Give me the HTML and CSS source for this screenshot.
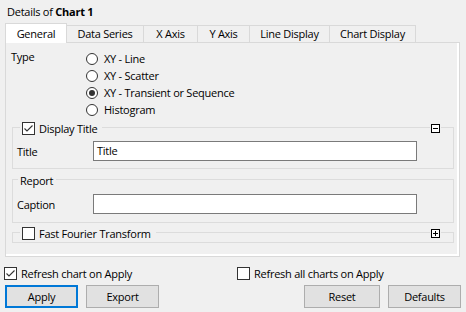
FILE: index.html
```html
<!DOCTYPE html>
<html lang="en">
<head>
  <meta charset="UTF-8">
  <title>Details of Chart 1</title>
  <link rel="stylesheet" href="styles.css">
</head>
<body>
  <div class="caption">Details of <b>Chart 1</b></div>

  <div class="tabs">
    <div class="tab tab-general active">General</div>
    <div class="tab tab-series">Data Series</div>
    <div class="tab tab-x">X Axis</div>
    <div class="tab tab-y">Y Axis</div>
    <div class="tab tab-line">Line Display</div>
    <div class="tab tab-chart">Chart Display</div>
  </div>

  <div class="panel">
    <div class="page">
      <div class="type-row">
        <div class="type-label">Type</div>
        <div class="radios">
          <div class="radio"><span class="radio-dot"></span>XY - Line</div>
          <div class="radio"><span class="radio-dot"></span>XY - Scatter</div>
          <div class="radio"><span class="radio-dot checked"></span>XY - Transient or Sequence</div>
          <div class="radio"><span class="radio-dot"></span>Histogram</div>
        </div>
      </div>

      <div class="group group-title">
        <div class="group-head">
          <span class="head-title">
            <span class="check"><svg width="11" height="11" viewBox="0 0 11 11"><polyline points="1.5,5.5 4,8 9.5,2.5" fill="none" stroke="#333" stroke-width="1.1"/></svg></span>
            Display Title
          </span>
          <span class="toggle"><svg width="9" height="9" viewBox="0 0 9 9"><rect x="0.5" y="0.5" width="8" height="8" fill="#fff" stroke="#000"/><line x1="2" y1="4.5" x2="7" y2="4.5" stroke="#000"/></svg></span>
        </div>
        <div class="field">
          <span class="field-label">Title</span>
          <div class="input">Title</div>
        </div>
      </div>

      <div class="group group-report">
        <div class="group-head">
          <span class="head-title">Report</span>
        </div>
        <div class="field">
          <span class="field-label">Caption</span>
          <div class="input"></div>
        </div>
      </div>

      <div class="group group-fft">
        <div class="group-head">
          <span class="head-title">
            <span class="check"></span>
            Fast Fourier Transform
          </span>
          <span class="toggle"><svg width="9" height="9" viewBox="0 0 9 9"><rect x="0.5" y="0.5" width="8" height="8" fill="#fff" stroke="#000"/><line x1="2" y1="4.5" x2="7" y2="4.5" stroke="#000"/><line x1="4.5" y1="2" x2="4.5" y2="7" stroke="#000"/></svg></span>
        </div>
      </div>
    </div>
  </div>

  <div class="options">
    <div class="option option-one">
      <span class="check"><svg width="11" height="11" viewBox="0 0 11 11"><polyline points="1.5,5.5 4,8 9.5,2.5" fill="none" stroke="#333" stroke-width="1.1"/></svg></span>
      Refresh chart on Apply
    </div>
    <div class="option">
      <span class="check"></span>
      Refresh all charts on Apply
    </div>
  </div>

  <div class="buttons">
    <button class="btn btn-default">Apply</button>
    <button class="btn">Export</button>
    <button class="btn btn-reset">Reset</button>
    <button class="btn">Defaults</button>
  </div>
</body>
</html>
```

FILE: styles.css
```css
body {
  margin: 0;
  background: #f0f0f0;
  font-family: "Open Sans", "Noto Sans", sans-serif;
  font-size: 11px;
  letter-spacing: -0.25px;
  color: #000;
}
.caption {
  padding: 4px 0 0 7px;
  line-height: 15px;
}
.tabs {
  display: flex;
  align-items: flex-end;
  margin: 4px 0 0 5px;
  height: 19px;
}
.tab {
  box-sizing: border-box;
  height: 17px;
  line-height: 16px;
  text-align: center;
  border-top: 1px solid #d9d9d9;
  border-left: 1px solid #d9d9d9;
  background: #f0f0f0;
}
.tab.active {
  position: relative;
  z-index: 1;
  height: 20px;
  line-height: 19px;
  margin-bottom: -1px;
  border-right: 1px solid #d9d9d9;
  background: #fff;
}
.tab.active + .tab {
  border-left: none;
}
.tab-general { width: 62px; }
.tab-series { width: 76px; }
.tab-x { width: 54px; }
.tab-y { width: 52px; }
.tab-line { width: 80px; }
.tab-chart { width: 87px; border-right: 1px solid #d9d9d9; }

.panel {
  box-sizing: border-box;
  width: 455px;
  margin-left: 5px;
  border: 1px solid #d9d9d9;
  background: #fff;
}
.page {
  height: 211px;
  margin: 0 2px 2px 0;
  background: #f0f0f0;
  overflow: hidden;
}

.type-row {
  display: flex;
  padding: 7px 0 0 5px;
}
.type-label {
  width: 75px;
  line-height: 13px;
}
.radio {
  display: flex;
  align-items: center;
  height: 17px;
}
.radio-dot {
  box-sizing: border-box;
  width: 12px;
  height: 12px;
  margin-right: 6px;
  border: 1px solid #333;
  border-radius: 50%;
  background: #fff;
  display: flex;
  align-items: center;
  justify-content: center;
}
.radio-dot.checked::after {
  content: "";
  width: 6px;
  height: 6px;
  border-radius: 50%;
  background: #333;
}

.group {
  border: 1px solid #dcdcdc;
  margin: 9px 3px 0 6px;
}
.group-title { padding-bottom: 7px; }
.group-report { margin-top: 10px; padding-bottom: 8px; }
.group-fft { padding-bottom: 1px; }
.group-head {
  display: flex;
  align-items: center;
  height: 15px;
  margin-top: -7px;
  padding-left: 7px;
}
.head-title {
  display: flex;
  align-items: center;
  height: 15px;
  padding: 0 5px 0 2px;
  background: #f0f0f0;
}
.group-report .head-title {
  padding: 0 3px 0 2px;
  margin-left: -2px;
}
.check {
  box-sizing: border-box;
  width: 13px;
  height: 13px;
  margin-right: 4px;
  border: 1px solid #333;
  background: #fff;
  display: flex;
}
.toggle {
  display: flex;
  margin: 0 12px 0 auto;
  padding: 0 1px;
  background: #f0f0f0;
}

.field {
  display: flex;
  align-items: center;
  padding-left: 4px;
  margin-top: 5px;
}
.group-report .field { margin-top: 6px; }
.field-label {
  width: 76px;
}
.input {
  box-sizing: border-box;
  width: 324px;
  height: 20px;
  padding-left: 3px;
  line-height: 18px;
  border: 1px solid #7a7a7a;
  background: #fff;
}

.options {
  display: flex;
  align-items: center;
  height: 18px;
  margin-top: 7px;
  padding-left: 4px;
}
.option {
  display: flex;
  align-items: center;
}
.option-one {
  width: 233px;
}
.buttons {
  display: flex;
  margin-top: 3px;
  padding: 0 5px;
  gap: 8px;
}
.btn {
  box-sizing: border-box;
  width: 73px;
  height: 23px;
  padding: 0;
  font: inherit;
  letter-spacing: inherit;
  color: #000;
  background: #e1e1e1;
  border: 1px solid #adadad;
}
.btn-default {
  border: 2px solid #0078d7;
}
.btn-reset {
  margin-left: auto;
  width: 76px;
}
```
